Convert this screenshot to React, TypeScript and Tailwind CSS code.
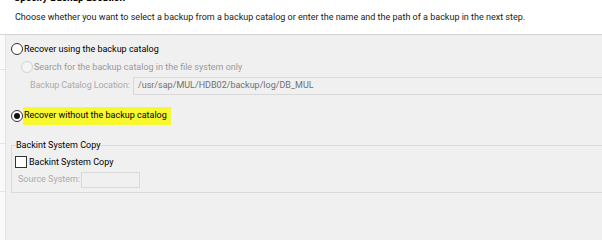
import React from "react";

function Radio({ checked = false, disabled = false }: { checked?: boolean; disabled?: boolean }) {
  return (
    <span
      className={
        "flex h-[12px] w-[12px] shrink-0 items-center justify-center rounded-full border " +
        (disabled ? "border-[#d2d2d2] bg-[#f4f4f4]" : "border-[#333333] bg-white")
      }
    >
      {checked && <span className="h-[6px] w-[6px] rounded-full bg-[#111111]" />}
    </span>
  );
}

export default function App() {
  return (
    <div
      className="relative h-[240px] w-[602px] overflow-hidden whitespace-nowrap bg-[#f0f0f0] text-[9px] text-black"
      style={{ fontFamily: 'Roboto, "Noto Sans", sans-serif' }}
    >
      {/* header */}
      <div className="flex h-[35px] flex-col border-b border-[#d5d5d5] bg-white">
        <div className="ml-[14px] mt-[-9px] h-[14px] text-[10px] font-bold leading-[14px]">Specify Backup Location</div>
        <div className="ml-[15px] mt-[5px] leading-[14px] text-[#1a1a1a]">
          Choose whether you want to select a backup from a backup catalog or enter the name and the path of a backup in the next step.
        </div>
      </div>

      <div className="flex h-[205px]">
        {/* left strip */}
        <div className="flex w-[6px] shrink-0 flex-col border-r border-[#e2e2e2] bg-[#fafafa]">
          <div className="h-[35px] border-b border-[#e2e2e2]" />
          <div className="h-[74px] border-b border-[#e2e2e2]" />
          <div className="h-[48px] border-b border-[#e2e2e2]" />
        </div>

        <div className="flex flex-1 flex-col pt-[6px]">
          <div className="flex h-[16px] items-center gap-[1px] pl-[5px]">
            <Radio />
            <span className="leading-[16px]">Recover using the backup catalog</span>
          </div>
          <div className="mt-[2px] flex h-[16px] items-center gap-[1px] pl-[15px]">
            <Radio disabled />
            <span className="leading-[16px] text-[#9a9a9a]">Search for the backup catalog in the file system only</span>
          </div>
          <div className="mt-[2px] flex h-[18px] items-center pl-[24px]">
            <span className="w-[103px] shrink-0 tracking-[-0.1px] text-[#ababab]">Backup Catalog Location:</span>
            <div className="flex h-[18px] flex-1 items-center border border-r-0 border-[#d9d9d9] bg-[#f0f0f0] pl-[4px] text-[#707070]">
              /usr/sap/MUL/HDB02/backup/log/DB_MUL
            </div>
          </div>
          <div className="mt-[12px] flex h-[18px] items-center pl-[5px]">
            <Radio checked />
            <span className="flex h-[18px] items-center bg-[#f8f82e] pl-[1px] pr-[4px]">Recover without the backup catalog</span>
          </div>

          <fieldset className="ml-[5px] mt-[14px] border border-r-0 border-[#dadada] pb-[4px]">
            <legend className="ml-[4px] px-0 leading-[12px]">Backint System Copy</legend>
            <div className="ml-[3px] mt-[4px] flex h-[14px] items-center gap-[2px]">
              <span className="h-[12px] w-[12px] shrink-0 border border-[#333333] bg-white" />
              <span className="leading-[14px]">Backint System Copy</span>
            </div>
            <div className="ml-[6px] mt-[3px] flex h-[16px] items-center">
              <span className="w-[63px] shrink-0 text-[#ababab]">Source System:</span>
              <span className="h-[16px] w-[59px] border border-[#d9d9d9] bg-[#f0f0f0]" />
            </div>
          </fieldset>
        </div>
      </div>
    </div>
  );
}
